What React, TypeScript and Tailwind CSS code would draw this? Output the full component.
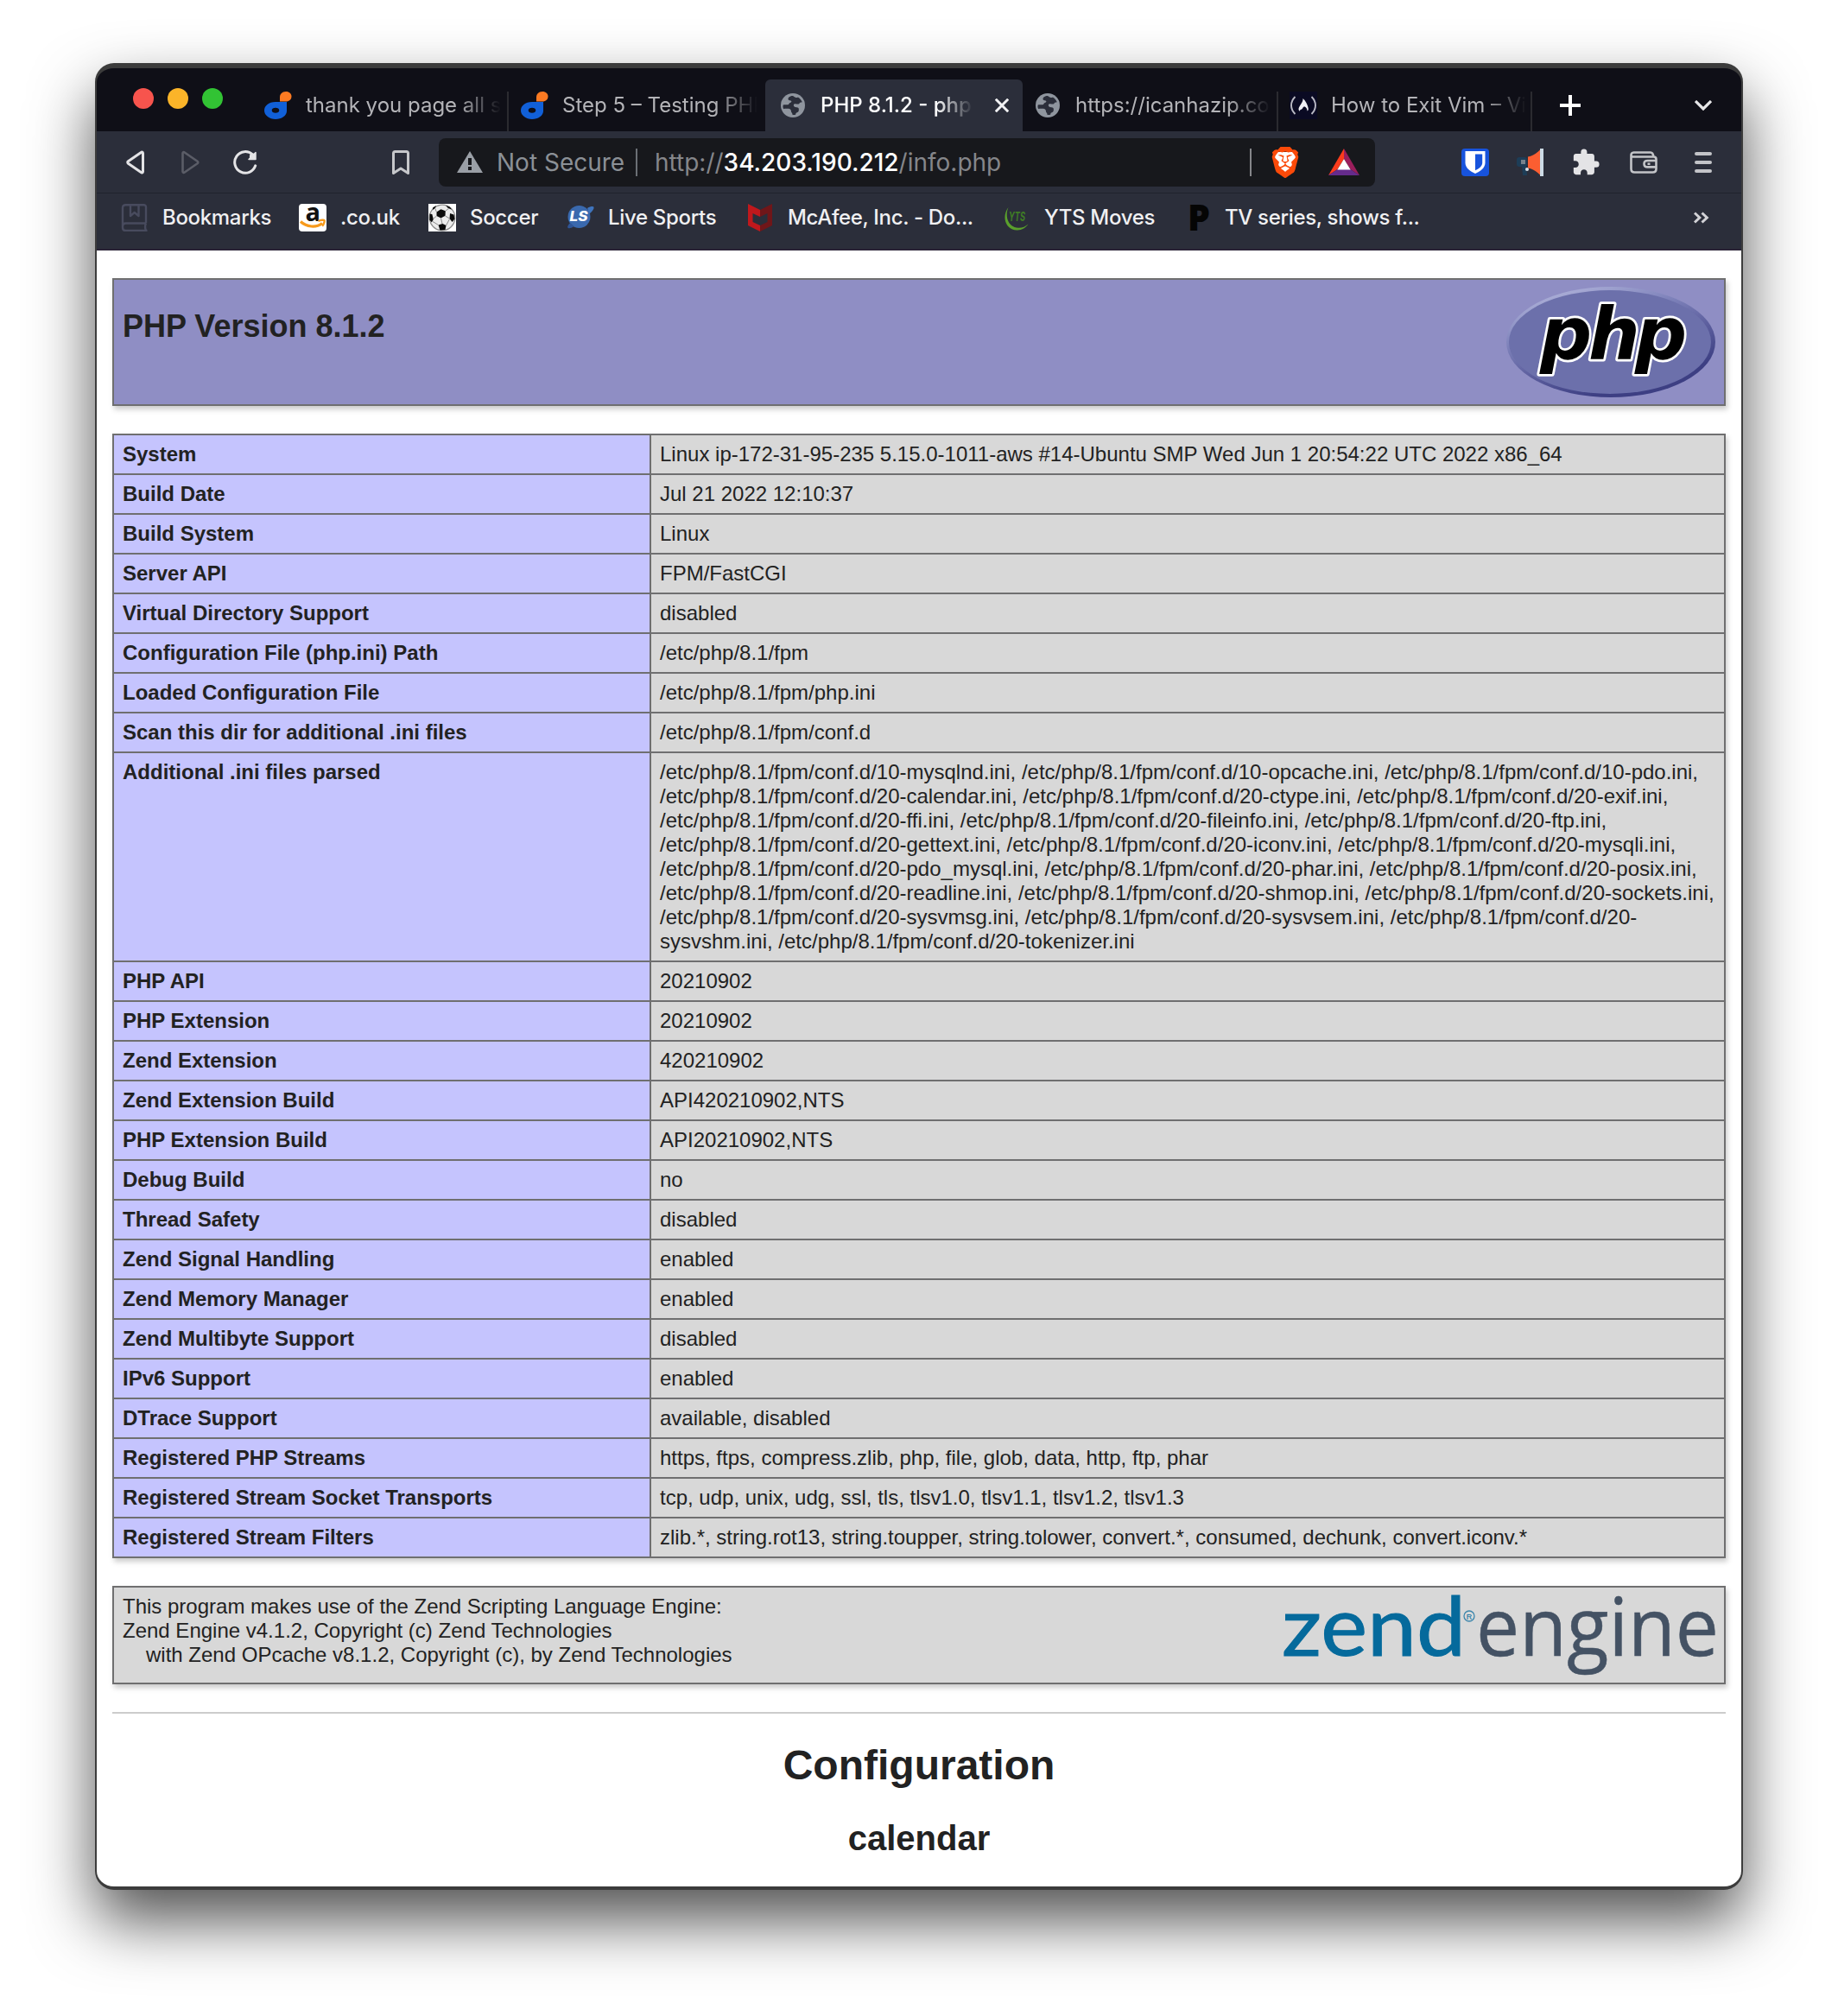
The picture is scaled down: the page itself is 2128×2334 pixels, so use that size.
import React from "react";
import { MdExtension } from "react-icons/md";
import { SiBrave } from "react-icons/si";

const UI = "font-['Inter',sans-serif]";

function DigitalOceanDocsIcon() {
  return (
    <svg viewBox="0 0 32 32" className="size-8 shrink-0">
      <path d="M18 6.5C18 3 20.5 0 25 0c4 0 6.500 2.500 6.500 5.500 0 3.500-2.500 6-6.500 6H18Z" fill="#fb7a22" />
      <path
        fillRule="evenodd"
        d="M26 12v10.500C26 28 20 32 13 32S0 27.500 0 22s5-10 13-10Zm-13 6.800c-2.500 0-4.300 1.300-4.300 3s1.800 3 4.300 3 4.300-1.300 4.300-3-1.800-3-4.300-3Z"
        fill="#1160d8"
      />
    </svg>
  );
}

function GlobeIcon() {
  return (
    <svg viewBox="0 0 32 32" className="size-8 shrink-0">
      <circle cx="16" cy="16" r="14" fill="#8f959e" />
      <path
        d="M16.500 5.200c-2.500-.6-6 1.300-6 3.400 0 1.700 1.500 1.700 3 1.900 1.500.3 1 2-.8 2.500-1.400.5-1 2-2.700 2.300-2 .3-3.500-.5-5.200.2-.6 1.500-.3 3.200.3 4.500 1.800-.2 4-.4 5.700-.2 2 .3 3.300 1.400 3.200 3.200-.1 1.500 1.600 1.500 1.600 3.900 1.200.2 2.400.1 3.500-.1.200-2 1-2.600 2.700-3.100 1.300-.5 1-2.700 1-3.700 0-1.600-2.100-2-4-2.100-2.200-.1-2.600-3-.8-3.600 1.600-.5 2.900.4 4.300.3 1.500-.1 1.200-1.800 2.600-2.100.7-.2 1.300.1 1.900-.2-1-2.600-2.800-4.700-5.100-5.900-.5 1.500-3.900.100-5.200-1.200Z"
        fill="#2b2e3a"
      />
    </svg>
  );
}

function FreeCodeCampIcon() {
  return (
    <svg viewBox="0 0 32 32" className="size-8 shrink-0">
      <rect width="32" height="32" fill="#0a0a23" />
      <path d="M6.500 6C.5 12 .5 20 6.500 26M25.500 6c6 6 6 14 0 20" fill="none" stroke="#b9b9c4" strokeWidth="1.900" />
      <path d="M15.500 8c2.500 2 5.800 7.500 6.300 12 .1 1-.3 2-1.300 2.500 0-3-2-5.500-3.700-5-1.600.4-1.200 2.800-3.300 3.200-1.300.3-1.600 1-1.500 2-1.500-1-2-2.300-1-4.500C12.300 15.500 15.800 12 15.500 8Z" fill="#f0f0f5" />
    </svg>
  );
}

function Tab({
  icon,
  title,
  active,
  divider,
}: {
  icon: React.ReactNode;
  title: string;
  active?: boolean;
  divider?: boolean;
}) {
  return (
    <div
      className={
        active
          ? "flex h-[60px] w-[298px] shrink-0 items-center rounded-t-md bg-[#2b2e3a] pl-4"
          : "relative flex h-[60px] w-[297px] shrink-0 items-center pl-[14px] last-of-type:w-[295px]"
      }
    >
      {icon}
      <span
        className={
          active
            ? "ml-4 w-[186px] overflow-hidden whitespace-nowrap text-2xl font-medium text-white [mask-image:linear-gradient(to_right,black_72%,transparent_95%)]"
            : "ml-4 w-[226px] overflow-hidden whitespace-nowrap text-2xl text-[#b4b4b8] [mask-image:linear-gradient(to_right,black_78%,transparent_100%)]"
        }
      >
        {title}
      </span>
      {active && (
        <svg viewBox="0 0 16 16" className="ml-4 size-4" fill="none" stroke="#f2f2f4" strokeWidth="3">
          <path d="M.8.8l14.400 14.400M15.200.8.8 15.200" />
        </svg>
      )}
      {divider && <span className="absolute right-0 bottom-0 h-[46px] w-0.5 bg-[#2b2b30]" />}
    </div>
  );
}

function TabStrip() {
  return (
    <div className="flex h-[73px] items-end bg-[#0f0f17]">
      <div className="flex w-[180px] shrink-0 gap-4 self-start pt-[23px] pl-[42px]">
        <span className="size-6 rounded-full bg-[#f7544d]" />
        <span className="size-6 rounded-full bg-[#fbb429]" />
        <span className="size-6 rounded-full bg-[#32c334]" />
      </div>
      <Tab icon={<DigitalOceanDocsIcon />} title="thank you page all s" divider />
      <Tab icon={<DigitalOceanDocsIcon />} title="Step 5 – Testing PHP" />
      <Tab icon={<GlobeIcon />} title="PHP 8.1.2 - phpinfo()" active />
      <div className="-ml-px flex">
        <Tab icon={<GlobeIcon />} title="https://icanhazip.com" divider />
        <div className="-ml-px flex">
          <Tab icon={<FreeCodeCampIcon />} title="How to Exit Vim – Vim" divider />
        </div>
      </div>
      <div className="flex h-[60px] flex-1 items-center justify-between pr-[34px] pl-8">
        <svg viewBox="0 0 24 24" className="size-6" stroke="#fff" strokeWidth="4">
          <path d="M12 0v24M0 12h24" />
        </svg>
        <svg viewBox="0 0 20 12" className="h-3 w-5" fill="none" stroke="#e6e6e8" strokeWidth="3.200">
          <path d="M1 1l9 9 9-9" />
        </svg>
      </div>
    </div>
  );
}

function BatIcon() {
  return (
    <svg viewBox="0 0 36 31" className="mr-[18px] ml-[34px] h-[31px] w-9 shrink-0">
      <path d="M18 0v12L10.500 24 0 31Z" fill="#fb3c1c" />
      <path d="M18 0v12l7.500 12L36 31Z" fill="#9a1e5c" />
      <path d="M0 31l10.500-7h15L36 31Z" fill="#652b8c" />
      <path d="M18 12l7.700 12.500H10.300Z" fill="#fff" />
    </svg>
  );
}

function Toolbar() {
  return (
    <div className="flex h-[72px] items-center border-b border-[#20222d] bg-[#2b2e3a]">
      <svg viewBox="0 0 22 28" className="ml-[34px] h-7 w-[22px]" fill="none" stroke="#e4e4e6" strokeWidth="3" strokeLinejoin="round">
        <path d="M19.500 3.500v21c0 1.300-1.200 1.800-2.200 1L2.400 15.200c-.9-.7-.9-1.700 0-2.400L17.300 2.500c1-.8 2.200-.3 2.200 1Z" />
      </svg>
      <svg viewBox="0 0 22 28" className="ml-[41px] h-7 w-[22px]" fill="none" stroke="#5b5d67" strokeWidth="2.600" strokeLinejoin="round">
        <path d="M2.500 3.500v21c0 1.300 1.200 1.800 2.200 1l14.900-10.300c.9-.7.9-1.700 0-2.400L4.700 2.500c-1-.8-2.200-.3-2.200 1Z" />
      </svg>
      <svg viewBox="0 0 28 28" className="ml-[39px] size-7" fill="none" stroke="#e4e4e6" strokeWidth="3" strokeLinecap="round">
        <path d="M25.700 17.800A12.300 12.300 0 1 1 22.500 5" />
        <path d="M26 2.500v8h-8Z" fill="#e4e4e6" strokeWidth="1.500" strokeLinejoin="round" />
        <circle cx="22.500" cy="7" r="3.600" fill="#e4e4e6" stroke="none" />
      </svg>
      <svg viewBox="0 0 20 28" className="ml-[156px] h-7 w-5" fill="none" stroke="#c6c7ca" strokeWidth="3" strokeLinejoin="round">
        <path d="M1.500 3.500c0-1.300.7-2 2-2h13c1.300 0 2 .7 2 2v23L10 21l-8.500 5.500Z" />
      </svg>

      <div className="ml-[34px] flex h-14 w-[1084px] shrink-0 items-center rounded-lg bg-[#17181c] text-[28px]">
        <svg viewBox="0 0 30 25" className="ml-[21px] h-[25px] w-[30px] shrink-0">
          <path d="M15 0l15 25H0Z" fill="#9a9fa6" />
          <path d="M13 8h4v8h-4ZM13 18h4v4h-4Z" fill="#17181c" />
        </svg>
        <span className="ml-[16px] w-[161px] pt-px whitespace-nowrap text-[#8b9096]">Not Secure</span>
        <span className="h-8 w-0.5 shrink-0 bg-[#6b6f75]" />
        <span className="ml-5 flex-1 pt-px whitespace-nowrap text-[#85868a]">
          http://<span className="font-medium text-white">34.203.190.212</span>/info.php
        </span>
        <span className="h-8 w-0.5 shrink-0 bg-[#85868a]" />
        <span className="relative ml-[23px] flex h-9 w-8 shrink-0 items-center justify-center">
          <span className="absolute inset-x-1 inset-y-1.5 rounded-b-2xl bg-white" />
          <SiBrave className="relative size-9 shrink-0 text-[#fb4a09]" />
        </span>
        <BatIcon />
      </div>

      <svg viewBox="0 0 32 32" className="ml-[100px] size-8">
        <rect width="32" height="32" rx="4" fill="#1753dc" />
        <path d="M4.500 3h23v13.500C27.500 23 21 26.500 16 29 11 26.500 4.500 23 4.500 16.500Z" fill="#fff" />
        <path d="M16 6.500h8.200V16.500c0 4-4.200 6.800-8.200 8.800Z" fill="#1753dc" />
      </svg>
      <svg viewBox="0 0 32 32" className="ml-[31px] size-8">
        <rect x="1" y="10" width="12" height="11" rx="3" fill="#1d3d57" />
        <path d="M7 20h5l1 11H8Z" fill="#1d3d57" />
        <rect x="6" y="13" width="5" height="5" fill="#77828c" />
        <path d="M14 9.500c6-1 10-4 14-8v29c-4-4-8-7-14-8Z" fill="#fb5e31" />
        <circle cx="13" cy="24" r="2" fill="#d9e2ea" />
        <rect x="28" width="4" height="32" fill="#cddbe5" />
      </svg>
      <MdExtension className="ml-[32px] size-[34px] text-[#e4e4e6]" />
      <svg viewBox="0 0 32 26" className="ml-[34px] h-[26px] w-8" fill="none" stroke="#c3c4c8" strokeWidth="2.600" strokeLinejoin="round">
        <path d="M1.500 4.500v16c0 2.500 1.500 4 4 4h21c2.500 0 4-1.500 4-4v-11c0-2-1-3-3-3H3.500c-1.300 0-2-.7-2-2s.7-3 3-3H24c1.500 0 3 1.500 3.500 5" />
        <path d="M30.500 11h-10c-2.500 0-4 1.500-4 3.700s1.500 3.700 4 3.700h10M20.500 14.700h3" />
      </svg>
      <div className="ml-[43px] flex w-5 flex-col gap-1.5">
        <span className="h-1 rounded-full bg-[#c3c4c8]" />
        <span className="h-1 rounded-full bg-[#c3c4c8]" />
        <span className="h-1 rounded-full bg-[#c3c4c8]" />
      </div>
    </div>
  );
}

function BookmarksIcon() {
  return (
    <svg viewBox="0 0 32 32" className="size-8 shrink-0" fill="none" stroke="#484b5e" strokeWidth="2.400" strokeLinejoin="round">
      <path d="M29 22.500V3.500C29 2 28 1.200 26.500 1.200h-21C3 1.200 2 2.500 2 4.500v23C2 29.500 3 31 5.500 31H30.500M29 22.500H5.500C3.500 22.500 2 24 2 26.500M29 22.500c-1.500 3-1 6 0 8.500" />
      <path d="M11 1.500V14l4.700-4 4.800 4V1.500" />
    </svg>
  );
}

function AmazonIcon() {
  return (
    <svg viewBox="0 0 32 32" className="size-8 shrink-0">
      <rect width="32" height="32" rx="4" fill="#fff" />
      <text x="7.600" y="19.500" className="font-['Open_Sans',sans-serif] text-[29px] font-bold" fill="#111">a</text>
      <path d="M2 20.500C9 27 20 28 27 22.500" fill="none" stroke="#f79a1b" strokeWidth="3.200" />
      <path d="M22.500 19.800c3-1 6.500-1.300 7-.6.500.8-.5 4.500-2.500 6.500" fill="none" stroke="#f79a1b" strokeWidth="2.400" />
    </svg>
  );
}

function SoccerIcon() {
  return (
    <svg viewBox="0 0 32 32" className="size-8 shrink-0">
      <rect width="32" height="32" fill="#fff" />
      <circle cx="16" cy="16" r="14.800" fill="#ececec" stroke="#8d8d8d" strokeWidth="1.200" />
      <g fill="#0b0b0b">
        <path d="M9.500 9.500l5-3.300 5.300 2-.3 5.600-5 2.800-5-2.500Z" />
        <path d="M25 11l4.500 1.500 1 5-3 3.500-3-4Z" />
        <path d="M1.500 11.500l2.800.5 1.500 6-2 3.500-2.500-3Z" />
        <path d="M11.500 24.500l5-1.500 4 2-1 5-6 .8Z" />
        <path d="M5 4.500L9 2 8 4.500 5 7ZM20 1.800l5 2 2 3-4.500-2Z" />
      </g>
      <path d="M19.500 14l5 3M14.500 16.500l1.500 6.500M9.500 14l-4 3.500M24.500 17.500l-4 7.500M19.800 8.200l4-3M9.500 9.500L7.500 5M5 20.500l6.500 4" stroke="#8a8a8a" strokeWidth="1" fill="none" />
    </svg>
  );
}

function LiveSportsIcon() {
  return (
    <svg viewBox="0 0 32 32" className="size-8 shrink-0">
      <circle cx="14.500" cy="15" r="13" fill="#3a69ae" />
      <path d="M24 5c4-2.500 7-2.500 7.500-1 .4 2-2 5-5 7.500Z" fill="#3f74bd" />
      <path d="M1 27c1-3 2-4 3.500-5l4 4C5 28.500 2 29 1 27Z" fill="#2f5596" />
      <text x="3.500" y="20" textLength="21" lengthAdjust="spacingAndGlyphs" className="font-['Inter',sans-serif] text-[16px] font-extrabold italic" fill="#fff">LS</text>
    </svg>
  );
}

function McAfeeIcon() {
  return (
    <svg viewBox="0 0 32 32" className="size-8 shrink-0">
      <path d="M2 0l14 7v8l-8.500-4v10l8.500 4v7L2 25Z" fill="#c0181c" />
      <path d="M30 0L16 7v8l8.500-4v10L16 25v7l14-7Z" fill="#701619" />
    </svg>
  );
}

function YtsIcon() {
  return (
    <svg viewBox="0 0 32 32" className="size-8 shrink-0">
      <path d="M6.500 4C-2 15 3.500 31 17 30.500c5.500-.2 9.500-3 12.500-7-3.500 3-7 4.500-11.500 4.300C7.500 27.500 1.500 16 6.500 4Z" fill="#5aa02c" />
      <text x="7" y="20" textLength="19" lengthAdjust="spacingAndGlyphs" className="font-['Inter',sans-serif] text-[14px] font-bold italic" fill="#3f7d24">YTS</text>
    </svg>
  );
}

function LetterPIcon() {
  return (
    <svg viewBox="0 0 32 32" className="size-8 shrink-0">
      <text x="5" y="30.500" textLength="26" lengthAdjust="spacingAndGlyphs" className="font-['Open_Sans',sans-serif] text-[42px] font-extrabold" fill="#050505">P</text>
    </svg>
  );
}

const BOOKMARKS: { icon: React.ReactNode; label: string; width: string }[] = [
  { icon: <BookmarksIcon />, label: "Bookmarks", width: "w-[206px]" },
  { icon: <AmazonIcon />, label: ".co.uk", width: "w-[150px]" },
  { icon: <SoccerIcon />, label: "Soccer", width: "w-[160px]" },
  { icon: <LiveSportsIcon />, label: "Live Sports", width: "w-[208px]" },
  { icon: <McAfeeIcon />, label: "McAfee, Inc. - Do...", width: "w-[297px]" },
  { icon: <YtsIcon />, label: "YTS Moves", width: "w-[209px]" },
  { icon: <LetterPIcon />, label: "TV series, shows f...", width: "w-[320px]" },
];

function BookmarksBar() {
  return (
    <div className="flex h-[66px] items-center border-b-2 border-[#2a2336] bg-[#2b2e3a] pb-2 pl-7">
      {BOOKMARKS.map((b) => (
        <div key={b.label} className={`flex shrink-0 items-center gap-4 ${b.width}`}>
          {b.icon}
          <span className="text-2xl font-medium tracking-[-0.33px] whitespace-nowrap text-[#f0f0f2]">{b.label}</span>
        </div>
      ))}
      <svg viewBox="0 0 18 14" className="mr-[37px] ml-auto h-[14px] w-[18px]" fill="none" stroke="#d2d2d6" strokeWidth="3">
        <path d="M1 1.500L6.800 7 1 12.500M9.500 1.500L15.300 7l-5.800 5.500" />
      </svg>
    </div>
  );
}

function PhpLogo() {
  return (
    <svg viewBox="0 0 242 128" className="h-32 w-[242px] shrink-0">
      <defs>
        <linearGradient id="rim" x1="0.200" y1="0" x2="0.750" y2="1">
          <stop offset="0" stopColor="#b3b6dc" />
          <stop offset="0.300" stopColor="#8286bd" />
          <stop offset="0.600" stopColor="#5a5c9c" />
          <stop offset="0.850" stopColor="#3d3f83" />
        </linearGradient>
      </defs>
      <ellipse cx="121" cy="64" rx="121" ry="64" fill="url(#rim)" />
      <ellipse cx="120" cy="64" rx="117" ry="60" fill="#6c70ab" />
      <g
        className="font-['DejaVu_Sans',sans-serif] text-[84px] font-bold italic"
        fill="#000"
        stroke="#fff"
        strokeWidth="5.500"
        paintOrder="stroke"
        strokeLinejoin="round"
      >
        <text x="39" y="83.500">p</text>
        <text x="95" y="83.500">h</text>
        <text x="149" y="83.500">p</text>
      </g>
    </svg>
  );
}

function ZendEngineLogo() {
  return (
    <svg viewBox="0 0 502 98" className="h-[98px] w-[502px] shrink-0">
      <text x="0" y="71" textLength="213" lengthAdjust="spacingAndGlyphs" className="font-['Lato',sans-serif] text-[95px]" fill="#056a9c" stroke="#056a9c" strokeWidth="1">zend</text>
      <circle cx="217" cy="25" r="6" fill="none" stroke="#3c86ac" strokeWidth="1.300" />
      <text x="213.700" y="28.500" className="font-['Liberation_Sans',sans-serif] text-[9px]" fill="#056a9c">R</text>
      <text x="225" y="71" textLength="281" lengthAdjust="spacingAndGlyphs" className="font-['Open_Sans',sans-serif] text-[94px]" fill="#445264" stroke="#445264" strokeWidth="0.500">engine</text>
    </svg>
  );
}

const D = "/etc/php/8.1/fpm/conf.d/";

const ROWS: [string, string[]][] = [
  ["System", ["Linux ip-172-31-95-235 5.15.0-1011-aws #14-Ubuntu SMP Wed Jun 1 20:54:22 UTC 2022 x86_64"]],
  ["Build Date", ["Jul 21 2022 12:10:37"]],
  ["Build System", ["Linux"]],
  ["Server API", ["FPM/FastCGI"]],
  ["Virtual Directory Support", ["disabled"]],
  ["Configuration File (php.ini) Path", ["/etc/php/8.1/fpm"]],
  ["Loaded Configuration File", ["/etc/php/8.1/fpm/php.ini"]],
  ["Scan this dir for additional .ini files", ["/etc/php/8.1/fpm/conf.d"]],
  [
    "Additional .ini files parsed",
    [
      `${D}10-mysqlnd.ini, ${D}10-opcache.ini, ${D}10-pdo.ini,`,
      `${D}20-calendar.ini, ${D}20-ctype.ini, ${D}20-exif.ini,`,
      `${D}20-ffi.ini, ${D}20-fileinfo.ini, ${D}20-ftp.ini,`,
      `${D}20-gettext.ini, ${D}20-iconv.ini, ${D}20-mysqli.ini,`,
      `${D}20-pdo_mysql.ini, ${D}20-phar.ini, ${D}20-posix.ini,`,
      `${D}20-readline.ini, ${D}20-shmop.ini, ${D}20-sockets.ini,`,
      `${D}20-sysvmsg.ini, ${D}20-sysvsem.ini, ${D}20-`,
      `sysvshm.ini, ${D}20-tokenizer.ini`,
    ],
  ],
  ["PHP API", ["20210902"]],
  ["PHP Extension", ["20210902"]],
  ["Zend Extension", ["420210902"]],
  ["Zend Extension Build", ["API420210902,NTS"]],
  ["PHP Extension Build", ["API20210902,NTS"]],
  ["Debug Build", ["no"]],
  ["Thread Safety", ["disabled"]],
  ["Zend Signal Handling", ["enabled"]],
  ["Zend Memory Manager", ["enabled"]],
  ["Zend Multibyte Support", ["disabled"]],
  ["IPv6 Support", ["enabled"]],
  ["DTrace Support", ["available, disabled"]],
  ["Registered PHP Streams", ["https, ftps, compress.zlib, php, file, glob, data, http, ftp, phar"]],
  ["Registered Stream Socket Transports", ["tcp, udp, unix, udg, ssl, tls, tlsv1.0, tlsv1.1, tlsv1.2, tlsv1.3"]],
  ["Registered Stream Filters", ["zlib.*, string.rot13, string.toupper, string.tolower, convert.*, consumed, dechunk, convert.iconv.*"]],
];

function InfoTable() {
  return (
    <div className="mt-8 border-2 border-b-0 border-[#6f6f70] text-2xl leading-7 shadow-[2px_4px_6px_#ccc]">
      {ROWS.map(([name, lines]) => (
        <div key={name} className="flex border-b-2 border-[#6f6f70]">
          <div className="w-[622px] shrink-0 border-r-2 border-[#6f6f70] bg-[#c5c4fe] px-[10px] py-2 font-bold">{name}</div>
          <div className="flex-1 bg-[#d8d8d8] px-[10px] py-2 whitespace-nowrap">
            {lines.map((l) => (
              <div key={l}>{l}</div>
            ))}
          </div>
        </div>
      ))}
    </div>
  );
}

function PhpInfoPage() {
  return (
    <div className="flex-1 overflow-hidden bg-white px-[18px] pt-8 font-['Liberation_Sans',Arial,sans-serif] text-[#222]">
      <div className="flex h-[148px] justify-between border-2 border-[#6f6f70] bg-[#8f8ec4] pt-2 pr-[10px] pl-[10px] shadow-[2px_4px_6px_#ccc]">
        <h1 className="pt-[25px] text-4xl leading-[42px] font-bold">PHP Version 8.1.2</h1>
        <PhpLogo />
      </div>
      <InfoTable />
      <div className="mt-8 flex h-[114px] justify-between border-2 border-[#6f6f70] bg-[#d8d8d8] pt-2 pr-[10px] pl-[10px] text-2xl leading-7 shadow-[2px_4px_6px_#ccc]">
        <div>
          <div>This program makes use of the Zend Scripting Language Engine:</div>
          <div>Zend Engine v4.1.2, Copyright (c) Zend Technologies</div>
          <div className="pl-[27px]">with Zend OPcache v8.1.2, Copyright (c), by Zend Technologies</div>
        </div>
        <ZendEngineLogo />
      </div>
      <hr className="mt-8 h-0.5 border-0 bg-[#ccc]" />
      <h1 className="mt-8 text-center text-5xl leading-[56px] font-bold">Configuration</h1>
      <h2 className="mt-[33px] text-center text-[40px] leading-[46px] font-bold">calendar</h2>
    </div>
  );
}

export default function App() {
  return (
    <div className={`h-[2334px] w-[2128px] overflow-hidden bg-white pt-[73px] pl-[110px] ${UI}`}>
      <div className="flex h-[2115px] w-[1908px] flex-col overflow-hidden rounded-[22px] border-x-2 border-t-[6px] border-b-4 border-[#3c3c3c] bg-[#3c3c3c] shadow-[0_36px_72px_rgba(0,0,0,0.68)]">
        <TabStrip />
        <Toolbar />
        <BookmarksBar />
        <PhpInfoPage />
      </div>
    </div>
  );
}
